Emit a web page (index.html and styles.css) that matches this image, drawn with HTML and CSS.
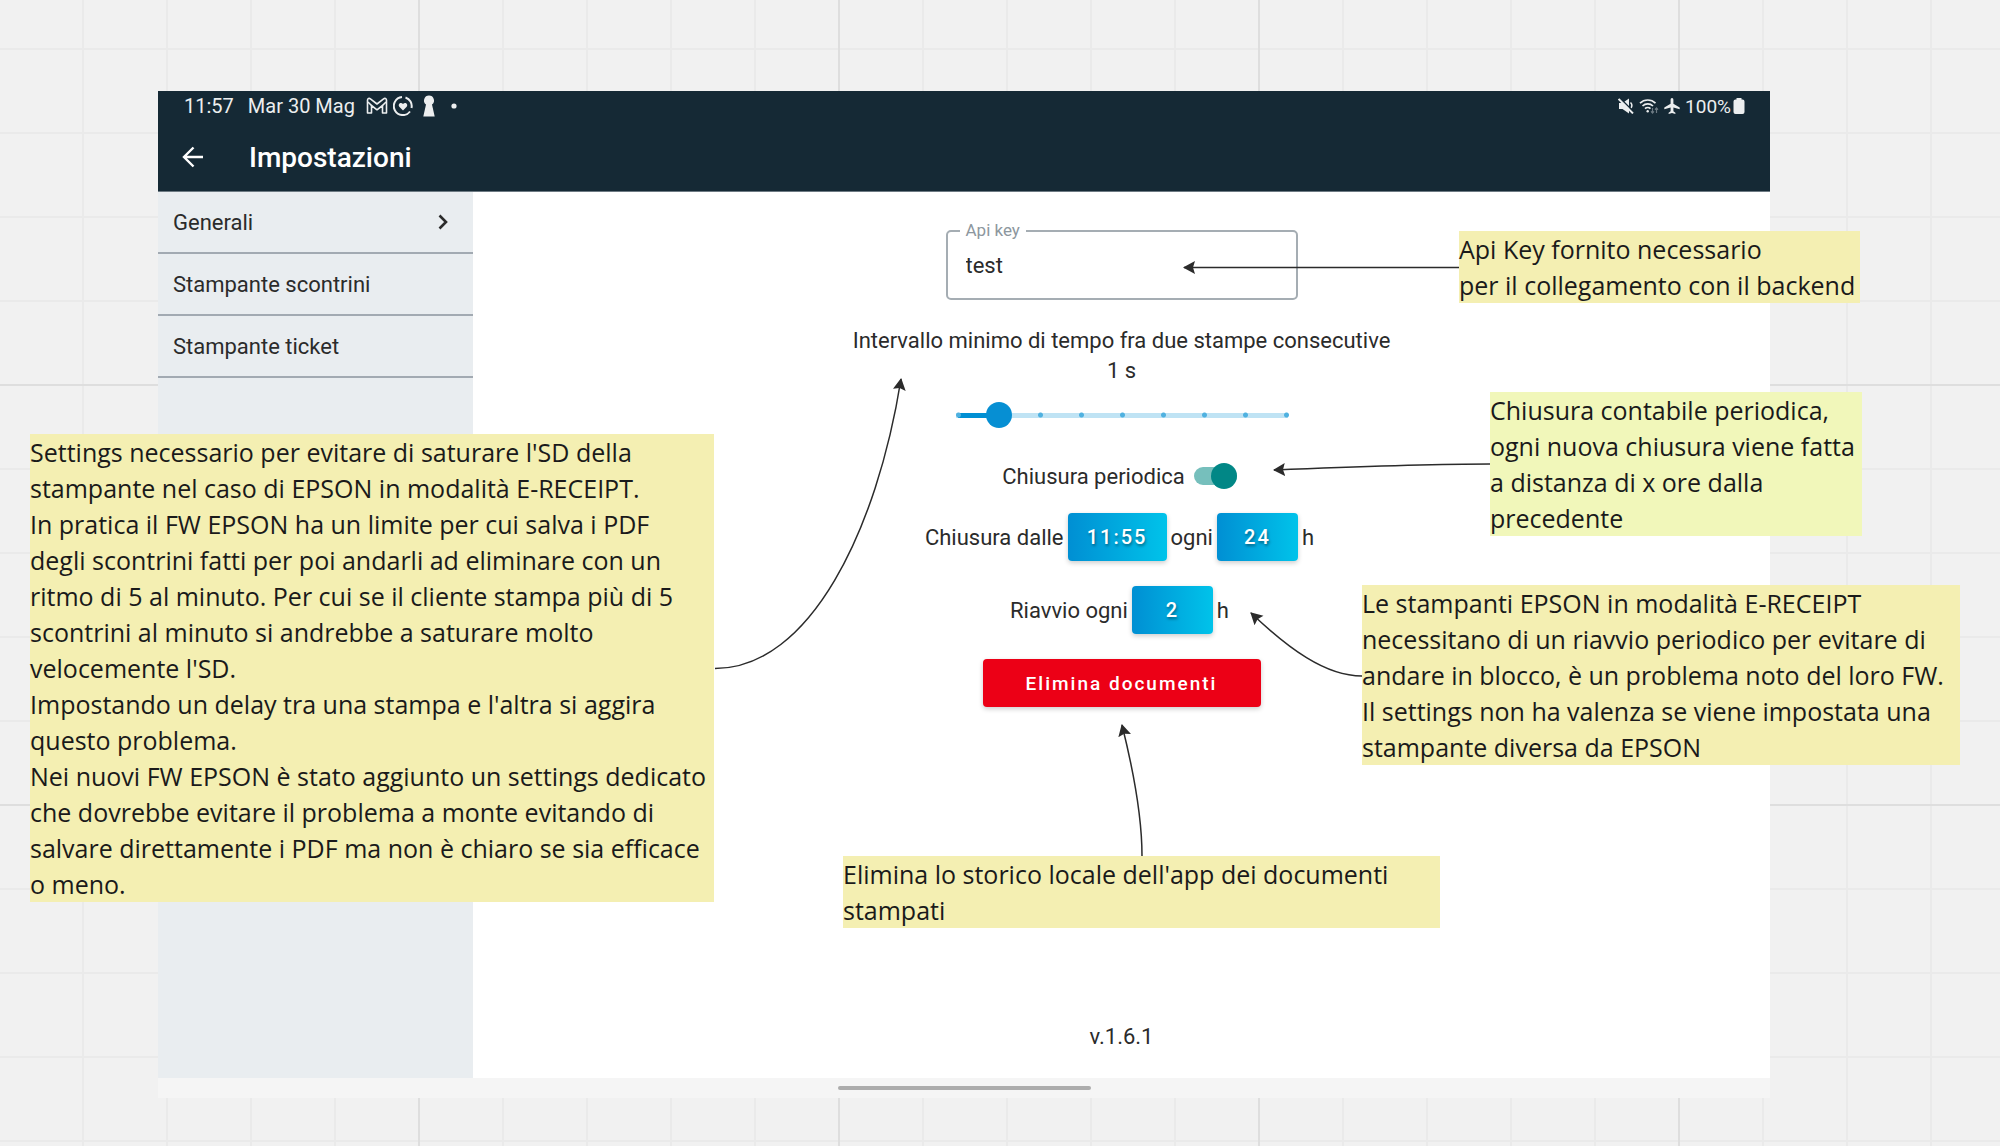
FILE: index.html
```html
<!DOCTYPE html>
<html lang="it">
<head>
    <meta charset="UTF-8">
    <meta name="viewport" content="width=device-width, initial-scale=1.0">
    <title>Impostazioni</title>
    <link rel="stylesheet" href="styles.css">
</head>
<body>
    <div class="board">
        <div class="tablet">
            <header class="top">
                <div class="status-bar">
                    <div class="status-left">
                        <span class="clock">11:57</span>
                        <span class="date">Mar 30 Mag</span>
                        <svg class="icon-mail" width="22" height="18" viewBox="0 0 22 18" fill="none" stroke="currentColor" stroke-width="1.6" stroke-linejoin="round">
                            <path d="M1.500 16V3.200C1.500 1.400 3.200 1 4.400 1.900L11 7l6.600-5.100C18.800 1 20.500 1.400 20.500 3.200V16h-4V8.500L11 12.800 5.500 8.500V16z"/>
                            <path d="M5.500 8.500 2 5M16.500 8.500 20 5"/>
                        </svg>
                        <svg class="icon-heart" width="20" height="20" viewBox="0 0 20 20">
                            <path d="M12.500 1.500A9 9 0 0 1 18.500 12M17 15.500A9 9 0 1 1 9 1.100" fill="none" stroke="currentColor" stroke-width="2"/>
                            <path d="M10 14.500 6.300 10.700C4.500 8.500 7.500 5.500 10 8c2.500-2.500 5.500.5 3.700 2.700z" fill="currentColor"/>
                        </svg>
                        <svg class="icon-key" width="12" height="22" viewBox="0 0 12 22" fill="currentColor">
                            <path d="M6 .5a5 5 0 0 1 3 9L11.700 21.500H.3L3 9.500A5 5 0 0 1 6 .5z"/>
                        </svg>
                        <svg class="icon-dot" width="6" height="6" viewBox="0 0 6 6" fill="currentColor"><circle cx="3" cy="3" r="2.600"/></svg>
                    </div>
                    <div class="status-right">
                        <svg width="16" height="16" viewBox="0 0 16 16">
                            <path d="M1 5h3.500L11 .5v15L4.500 11H1z" fill="currentColor"/>
                            <path d="M12.500 4.500c1.500 1.500 1.500 4 .5 5.500" fill="none" stroke="currentColor" stroke-width="1.500"/>
                            <path d="M1.800 0 16 14.200" stroke="#152935" stroke-width="1.600"/>
                            <path d="M.6 1 15 15.400" stroke="currentColor" stroke-width="2"/>
                        </svg>
                        <svg width="20" height="16" viewBox="0 0 20 16" fill="none" stroke="currentColor" stroke-width="1.700">
                            <path d="M1 5.200a11 11 0 0 1 15.500 0M3.500 8a7.500 7.500 0 0 1 10.500 0M6 10.700a4 4 0 0 1 5.500 0"/>
                            <circle cx="8.700" cy="13.300" r="1.200" fill="currentColor" stroke="none"/>
                            <path d="M13.500 10v5m-1.500-1.700 1.500 1.700 1.500-1.700M17.500 15v-5m-1.500 1.700 1.500-1.700 1.500 1.700" stroke="#6d7a83" stroke-width="1.200"/>
                        </svg>
                        <svg width="16" height="16" viewBox="0 0 16 16" fill="currentColor">
                            <path d="M8 0c.9 0 1.400.8 1.400 2v3.800L15.700 9.500v1.700L9.400 9.500v3.700l2 1.500V16L8 15.100 4.600 16v-1.300l2-1.500V9.500L.3 11.200V9.500L6.600 5.800V2C6.600.8 7.100 0 8 0z"/>
                        </svg>
                        <span class="battery-level">100%</span>
                        <svg width="12" height="16" viewBox="0 0 12 16" fill="currentColor">
                            <path d="M3.500 0h5v1.500h1a2 2 0 0 1 2 2V14a2 2 0 0 1-2 2h-7a2 2 0 0 1-2-2V3.500a2 2 0 0 1 2-2h1z"/>
                        </svg>
                    </div>
                </div>
                <div class="app-bar">
                    <button class="back-btn" aria-label="Indietro">
                        <svg width="22" height="22" viewBox="0 0 22 22" fill="none" stroke="currentColor" stroke-width="2.400">
                            <path d="M21 11H2M11.500 1.500 2 11l9.500 9.500"/>
                        </svg>
                    </button>
                    <h1 class="title">Impostazioni</h1>
                </div>
            </header>

            <div class="body">
                <nav class="sidebar">
                    <a href="#generali" class="menu-item">
                        Generali
                        <svg width="12" height="16" viewBox="0 0 12 16" fill="none" stroke="currentColor" stroke-width="2.600">
                            <path d="M2.500 1.500 9 8l-6.500 6.500"/>
                        </svg>
                    </a>
                    <a href="#scontrini" class="menu-item">Stampante scontrini</a>
                    <a href="#ticket" class="menu-item">Stampante ticket</a>
                </nav>

                <main class="settings">
                    <div class="field">
                        <label for="api-key">Api key</label>
                        <input type="text" id="api-key" value="test">
                    </div>

                    <div class="interval">
                        <label for="interval">Intervallo minimo di tempo fra due stampe consecutive</label>
                        <output for="interval">1 s</output>
                    </div>
                    <input type="range" class="slider" id="interval" min="0" max="8" step="1" value="1">

                    <div class="row row-switch">
                        <label for="periodic">Chiusura periodica</label>
                        <input type="checkbox" class="switch" id="periodic" role="switch" checked>
                    </div>

                    <div class="row">
                        <span>Chiusura dalle</span>
                        <button class="value-btn value-btn-wide">11:55</button>
                        <span>ogni</span>
                        <button class="value-btn">24</button>
                        <span>h</span>
                    </div>

                    <div class="row">
                        <span>Riavvio ogni</span>
                        <button class="value-btn">2</button>
                        <span>h</span>
                    </div>

                    <button class="delete-btn">Elimina documenti</button>

                    <p class="version">v.1.6.1</p>
                </main>
            </div>

            <div class="home-bar"><span class="home-handle"></span></div>
        </div>

        <!-- arrows from the notes to the settings -->
        <svg class="arrows" width="2000" height="1146" viewBox="0 0 2000 1146">
            <defs>
                <marker id="head" markerUnits="userSpaceOnUse" markerWidth="14" markerHeight="14" refX="11" refY="6.500" orient="auto">
                    <path d="M12 6.500 0 0 2 6.500 0 13z" fill="#2b2b2b"/>
                </marker>
            </defs>
            <g fill="none" stroke="#2b2b2b" stroke-width="1.500" marker-end="url(#head)">
                <path d="M1459 267.500H1184"/>
                <path d="M1490 464C1420 464 1350 467 1274 470"/>
                <path d="M1362 676C1325 676 1288 648 1251 613"/>
                <path d="M1142 856C1142 815 1132 765 1122 725"/>
                <path d="M715 668.500C810 668.500 877 530 901 379"/>
            </g>
        </svg>

        <aside class="note note-delay">
            Settings necessario per evitare di saturare l'SD della<br>
            stampante nel caso di EPSON in modalità E-RECEIPT.<br>
            In pratica il FW EPSON ha un limite per cui salva i PDF<br>
            degli scontrini fatti per poi andarli ad eliminare con un<br>
            ritmo di 5 al minuto. Per cui se il cliente stampa più di 5<br>
            scontrini al minuto si andrebbe a saturare molto<br>
            velocemente l'SD.<br>
            Impostando un delay tra una stampa e l'altra si aggira<br>
            questo problema.<br>
            Nei nuovi FW EPSON è stato aggiunto un settings dedicato<br>
            che dovrebbe evitare il problema a monte evitando di<br>
            salvare direttamente i PDF ma non è chiaro se sia efficace<br>
            o meno.
        </aside>
        <aside class="note note-api">
            Api Key fornito necessario<br>
            per il collegamento con il backend
        </aside>
        <aside class="note note-closing">
            Chiusura contabile periodica,<br>
            ogni nuova chiusura viene fatta<br>
            a distanza di x ore dalla<br>
            precedente
        </aside>
        <aside class="note note-restart">
            Le stampanti EPSON in modalità E-RECEIPT<br>
            necessitano di un riavvio periodico per evitare di<br>
            andare in blocco, è un problema noto del loro FW.<br>
            Il settings non ha valenza se viene impostata una<br>
            stampante diversa da EPSON
        </aside>
        <aside class="note note-delete">
            Elimina lo storico locale dell'app dei documenti<br>
            stampati
        </aside>
    </div>
</body>
</html>
```

FILE: styles.css
```css
* {
    margin: 0;
    padding: 0;
    box-sizing: border-box;
}

body {
    font-family: Roboto, sans-serif;
    font-size: 22px;
    color: #2b2b2b;
}

button, input {
    font-family: inherit;
    font-size: inherit;
    color: inherit;
    border: none;
}

svg {
    display: block;
    flex-shrink: 0;
}

/* whiteboard with a thin grid every 84px and a stronger one every 420px */
.board {
    position: relative;
    display: flex;
    min-height: 100vh;
    padding: 91px 230px 48px 158px;
    overflow: hidden;
    background-color: #f1f1f1;
    background-image:
        linear-gradient(90deg, #dedede 2px, transparent 2px),
        linear-gradient(#dedede 2px, transparent 2px),
        linear-gradient(90deg, #eaeaea 2px, transparent 2px),
        linear-gradient(#eaeaea 2px, transparent 2px);
    background-size: 420px 420px, 420px 420px, 84px 84px, 84px 84px;
    background-position: 418px 384px, 418px 384px, 82px 48px, 82px 48px;
}

.tablet {
    flex: 1;
    display: flex;
    flex-direction: column;
    background: white;
}

.top {
    background: #152935;
    color: white;
    border-bottom: 1px solid #6d7a83;
}

.status-bar {
    display: flex;
    justify-content: space-between;
    align-items: center;
    height: 30px;
    padding: 0 25px 0 26px;
    color: #eceeef;
}

.status-left, .status-right {
    display: flex;
    align-items: center;
}

.status-left {
    font-size: 20px;
}

.status-right {
    gap: 5px;
    font-size: 19px;
}

.date {
    margin: 0 11px 0 14px;
}

.icon-heart {
    margin-left: 5px;
}

.icon-key {
    margin: 0 16px 0 10px;
}

.battery-level {
    margin-right: -3px;
}

.app-bar {
    display: flex;
    align-items: center;
    height: 70px;
    padding: 2px 24px 0;
    gap: 45px;
}

.back-btn {
    background: none;
    color: white;
    cursor: pointer;
}

.title {
    font-size: 28px;
    font-weight: 500;
}

.body {
    flex: 1;
    display: flex;
}

.sidebar {
    width: 315px;
    background: #e9edf0;
}

.menu-item {
    display: flex;
    justify-content: space-between;
    align-items: center;
    height: 62px;
    padding: 0 24px 0 15px;
    border-bottom: 2px solid #a2aab2;
    color: #2b2b2b;
    text-decoration: none;
}

.settings {
    flex: 1;
    display: flex;
    flex-direction: column;
    align-items: center;
    padding-top: 38px;
}

.field {
    position: relative;
    width: 352px;
}

.field label {
    position: absolute;
    top: -10px;
    left: 14px;
    padding: 0 6px;
    background: white;
    font-size: 17px;
    line-height: 20px;
    color: #8d979e;
}

.field input {
    display: block;
    width: 100%;
    height: 70px;
    padding: 0 18px;
    border: 2px solid #a5adb3;
    border-radius: 5px;
    background: none;
    outline: none;
}

.interval {
    display: flex;
    flex-direction: column;
    align-items: center;
    margin-top: 26px;
    line-height: 30px;
}

.slider {
    appearance: none;
    width: 354px;
    height: 26px;
    margin-top: 16px;
    background:
        radial-gradient(circle, #4fb1e0 2px, transparent 3px) -7px center / 41px 6px repeat-x,
        linear-gradient(#008fd3, #008fd3) 13px center / 41px 5px no-repeat,
        linear-gradient(#bfe3f4, #bfe3f4) center / 332px 5px no-repeat;
    cursor: pointer;
}

.slider::-webkit-slider-thumb {
    appearance: none;
    width: 26px;
    height: 26px;
    border-radius: 50%;
    background: #068fd3;
}

.row {
    display: flex;
    align-items: center;
    gap: 4px;
    height: 48px;
    margin-bottom: 25px;
    padding-right: 4px;
}

.row-switch {
    gap: 9px;
    margin: 24px 0 13px;
}

.switch {
    appearance: none;
    display: flex;
    align-items: center;
    width: 43px;
    height: 18px;
    background: #76bfbc;
    border-radius: 9px;
    cursor: pointer;
}

.switch::before {
    content: "";
    flex-shrink: 0;
    width: 26px;
    height: 26px;
    border-radius: 50%;
    background: #018786;
}

.switch:checked {
    justify-content: flex-end;
}

.value-btn, .delete-btn {
    height: 48px;
    border-radius: 4px;
    color: white;
    font-size: 20px;
    font-weight: 500;
    letter-spacing: 2px;
    box-shadow: 0 2px 5px rgba(0, 0, 0, 0.2);
    cursor: pointer;
}

.value-btn {
    width: 81px;
    background: linear-gradient(90deg, #008fd3, #00c3ea);
    text-shadow: 1px 2px 3px rgba(0, 0, 0, 0.4);
}

.value-btn-wide {
    width: 99px;
}

.delete-btn {
    width: 278px;
    background: #ec0016;
    font-size: 19px;
}

.version {
    margin-top: auto;
    padding-bottom: 29px;
}

.home-bar {
    display: flex;
    justify-content: center;
    align-items: center;
    height: 20px;
    background: #f5f5f5;
}

.home-handle {
    width: 253px;
    height: 4px;
    border-radius: 2px;
    background: #acacac;
}

.arrows {
    position: absolute;
    top: 0;
    left: 0;
}

/* notes placed freely on the board */
.note {
    position: absolute;
    background: #f4efb2;
    color: #1a1a1a;
    font-family: "Open Sans", sans-serif;
    font-size: 25px;
    line-height: 36px;
    white-space: nowrap;
}

.note-delay {
    top: 434px;
    left: 30px;
    width: 684px;
}

.note-api {
    top: 231px;
    left: 1459px;
    width: 401px;
}

.note-closing {
    top: 392px;
    left: 1490px;
    width: 372px;
    background: #f1f7ba;
}

.note-restart {
    top: 585px;
    left: 1362px;
    width: 598px;
}

.note-delete {
    top: 856px;
    left: 843px;
    width: 597px;
}
```
